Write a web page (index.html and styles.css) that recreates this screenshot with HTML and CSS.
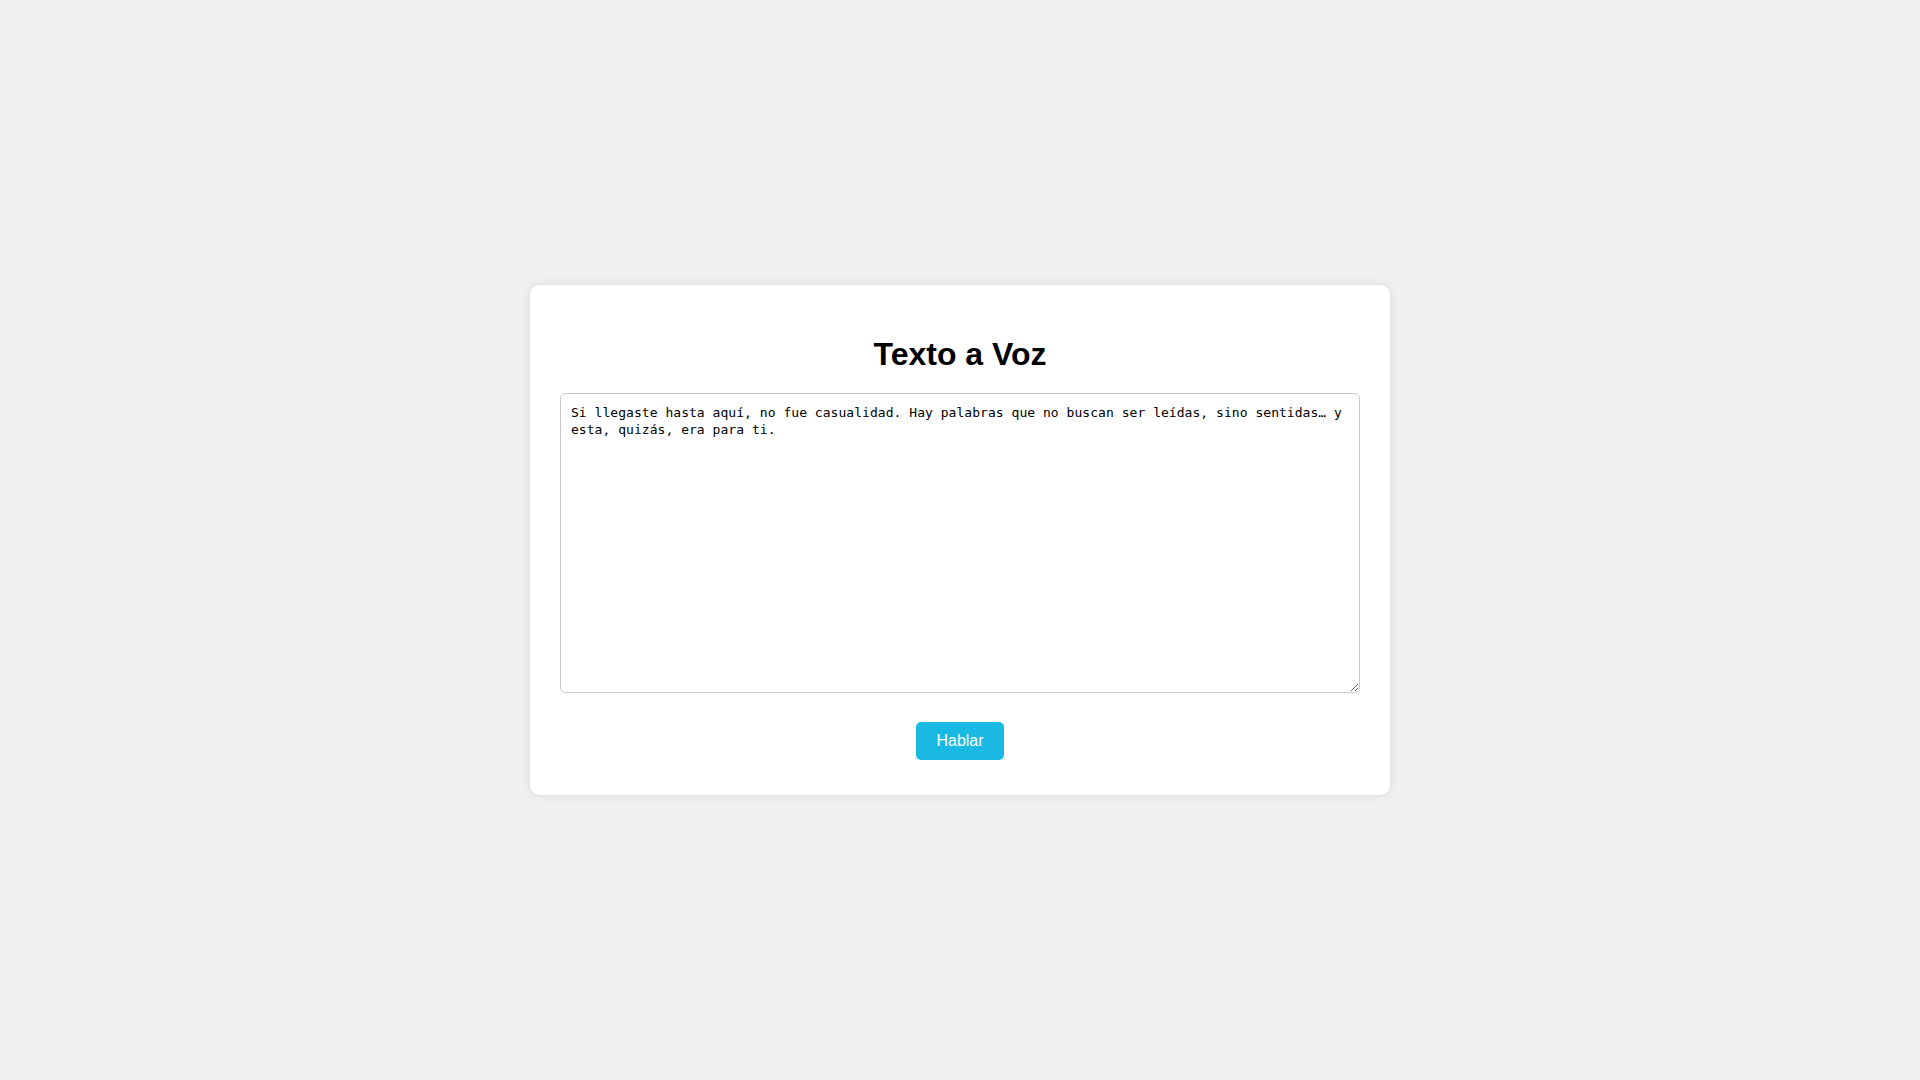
FILE: index.html
```html
<!DOCTYPE html>
<html lang="es">
<head>
<meta charset="utf-8">
<title>Texto a Voz</title>
<link rel="stylesheet" href="styles.css">
</head>
<body>
<main class="card">
  <h1 class="title">Texto a Voz</h1>
  <textarea class="text-input">Si llegaste hasta aquí, no fue casualidad. Hay palabras que no buscan ser leídas, sino sentidas… y esta, quizás, era para ti.</textarea>
  <div class="actions">
    <button class="speak-btn" type="button">Hablar</button>
  </div>
</main>
</body>
</html>
```
FILE: styles.css
```css
html, body {
  margin: 0;
  padding: 0;
}
body {
  background: #f0f0f0;
  font-family: "Liberation Sans", Arial, sans-serif;
  height: 100vh;
  display: flex;
  align-items: center;
  justify-content: center;
}
.card {
  box-sizing: border-box;
  width: 860px;
  background: #ffffff;
  border-radius: 10px;
  box-shadow: 0 0 10px rgba(0, 0, 0, 0.1);
  padding: 30px 30px 35px;
  display: flex;
  flex-direction: column;
}
.title {
  margin: 21px 0 21px;
  font-size: 32px;
  line-height: 36px;
  font-weight: bold;
  text-align: center;
  color: #000;
}
.text-input {
  box-sizing: border-box;
  width: 100%;
  height: 300px;
  margin: 0;
  padding: 10px;
  border: 1px solid #cccccc;
  border-radius: 5px;
  font-family: "DejaVu Sans Mono", "Liberation Mono", monospace;
  font-size: 13px;
  letter-spacing: 0.04px;
  line-height: 17px;
  color: #000;
  background: #fff;
}
.actions {
  display: flex;
  justify-content: center;
  margin-top: 29px;
}
.speak-btn {
  font-family: "Liberation Sans", Arial, sans-serif;
  font-size: 16px;
  line-height: 18px;
  padding: 10px 20px;
  border: none;
  border-radius: 5px;
  background: #1ab9e3;
  color: #ffffff;
  cursor: pointer;
}
```
